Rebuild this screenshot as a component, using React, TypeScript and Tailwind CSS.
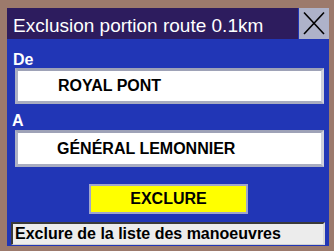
export default function App() {
  return (
    <div
      className="w-[334px] h-[251px] bg-[#9c7a6c] pt-[8px] pl-[7px] pr-[5px] pb-[5px]"
      style={{ fontFamily: '"Liberation Sans", Arial, sans-serif' }}
    >
      <div className="flex flex-col h-full bg-[#2136b6]">
        <div className="flex h-[31px] shrink-0">
          <div className="flex-1 bg-[#2d1c5e] text-white text-[19px] leading-[19px] pt-[8px] pl-[6px] whitespace-nowrap">
            Exclusion portion route 0.1km
          </div>
          <div className="w-[30px] h-[31px] bg-[#aeb2c9] ml-[1px]">
            <svg width="30" height="31" viewBox="0 0 30 31">
              <line x1="5" y1="4.5" x2="25" y2="26" stroke="#000" strokeWidth="1.6" />
              <line x1="25" y1="4.5" x2="5" y2="26" stroke="#000" strokeWidth="1.6" />
            </svg>
          </div>
        </div>
        <div className="flex flex-col flex-1 pl-[8px] pr-[5px]">
          <div className="h-[29px] pt-[13px] text-white font-bold text-[16px] leading-[16px] -ml-[2px]">De</div>
          <div className="h-[36px] bg-white border-t-[3px] border-l-[3px] border-b-[3px] border-r-[3px] border-t-[#9ea2b7] border-l-[#aeb2c4] border-b-[#a9adc0] border-r-[#cfd1dc] flex items-center pl-[40px] font-bold text-[16px] text-black">
            ROYAL PONT
          </div>
          <div className="h-[26px] pt-[9px] text-white font-bold text-[16px] leading-[16px] -ml-[3px]">A</div>
          <div className="h-[37px] bg-white border-t-[3px] border-l-[3px] border-b-[3px] border-r-[3px] border-t-[#9ea2b7] border-l-[#aeb2c4] border-b-[#a9adc0] border-r-[#cfd1dc] flex items-center pl-[39px] font-bold text-[16px] text-black">
            GÉNÉRAL LEMONNIER
          </div>
        </div>
        <div className="flex justify-center mt-[17px] ml-[1px]">
          <div className="w-[159px] h-[30px] bg-[#ffff00] border-2 border-[#a0a5cc] flex items-center justify-center font-bold text-[16px] text-black">
            EXCLURE
          </div>
        </div>
        <div className="mt-[8px] mx-[4px] mb-[1px] h-[23px] bg-[#ececec] border-t-2 border-l-2 border-b border-r-2 border-t-[#3a3a3a] border-l-[#3a3a3a] border-b-[#d0d0d0] border-r-[#d8d8d8] flex items-center pl-[2px] font-bold text-[16px] text-black whitespace-nowrap">
          Exclure de la liste des manoeuvres
        </div>
      </div>
    </div>
  );
}
